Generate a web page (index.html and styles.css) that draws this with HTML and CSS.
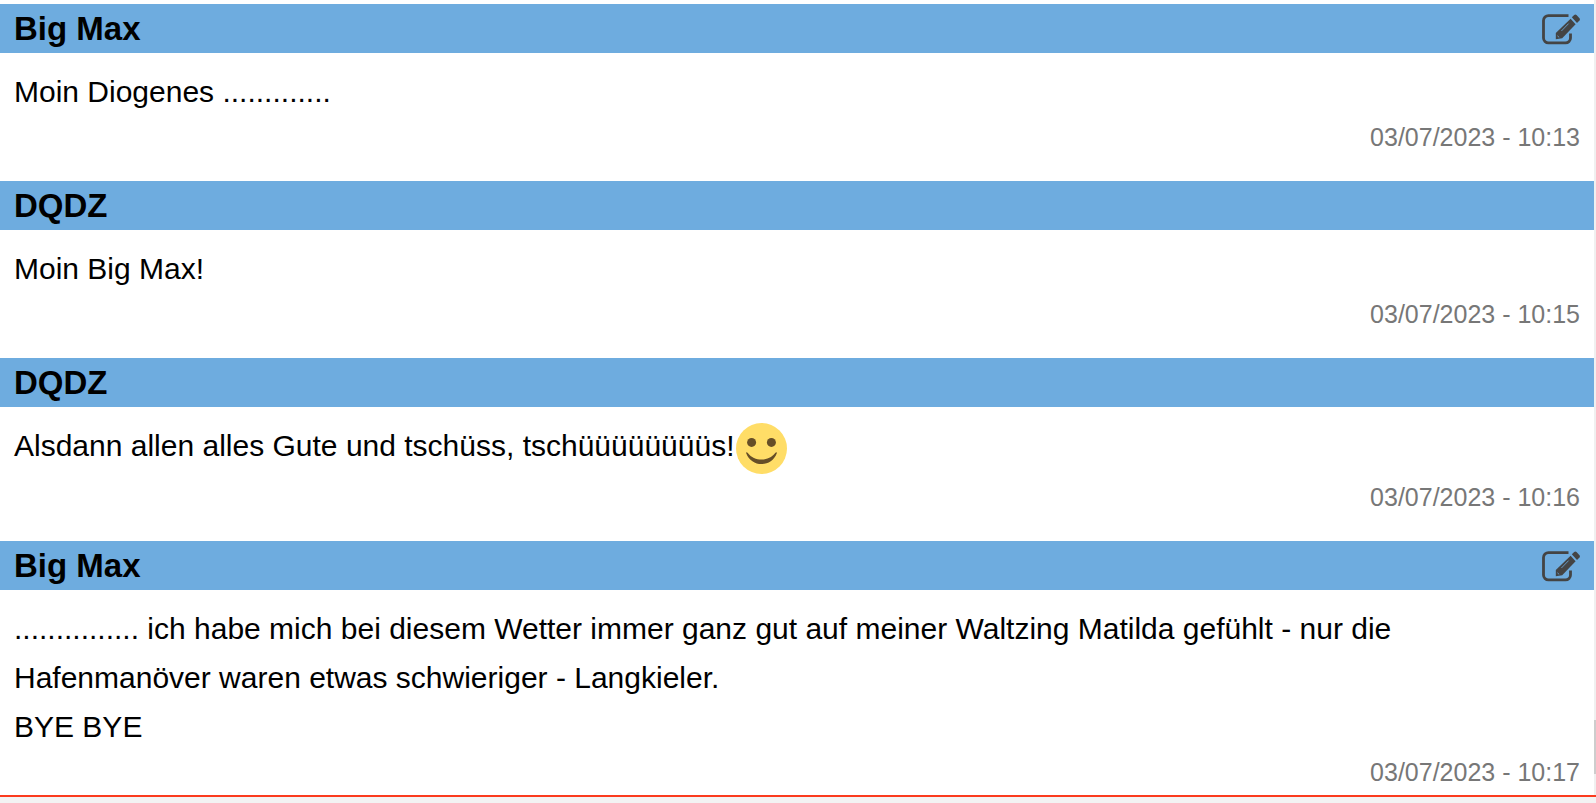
FILE: index.html
```html
<!DOCTYPE html>
<html lang="de">
<head>
    <meta charset="UTF-8">
    <meta name="viewport" content="width=device-width, initial-scale=1.0">
    <title>Chat</title>
    <link rel="stylesheet" href="styles.css">
</head>
<body>
    <svg class="sprite" aria-hidden="true">
        <symbol id="icon-edit" viewBox="0 0 38 31">
            <path d="M26.5 1.6H6.5a5 5 0 0 0-5 5V23.9a5 5 0 0 0 5 5H23.5a5 5 0 0 0 5-5V19.5" fill="none" stroke="#444" stroke-width="2.8"/>
            <path d="M28.6 4.8L33.6 10.2L20.2 24.3L13.8 25.2L13.8 18.9Z" fill="#444"/>
            <path d="M29.8 3.2L32.2 .9Q33.4 -.1 34.5 1L37.5 4.2Q38.4 5.4 37.5 6.4L35 8.9Z" fill="#444"/>
            <path d="M19.4 17L26.6 9.6M15.4 21.8L17.2 23.4" fill="none" stroke="#6eacdf" stroke-width=".8"/>
        </symbol>
    </svg>

    <div class="chat">
        <main class="messages">
            <article class="message">
                <header class="message-header">
                    <h2>Big Max</h2>
                    <button type="button" class="edit" aria-label="Bearbeiten"><svg><use href="#icon-edit"/></svg></button>
                </header>
                <p class="text">Moin Diogenes .............</p>
                <time class="date">03/07/2023 - 10:13</time>
            </article>

            <article class="message">
                <header class="message-header">
                    <h2>DQDZ</h2>
                </header>
                <p class="text">Moin Big Max!</p>
                <time class="date">03/07/2023 - 10:15</time>
            </article>

            <article class="message">
                <header class="message-header">
                    <h2>DQDZ</h2>
                </header>
                <p class="text">Alsdann allen alles Gute und tschüss, tschüüüüüüüüs!<svg class="smiley" viewBox="0 0 51 51" aria-hidden="true">
                    <circle cx="25.5" cy="25.5" r="25.5" fill="#ffdd67"/>
                    <circle cx="15.6" cy="19.4" r="4.5" fill="#664e27"/>
                    <circle cx="35.4" cy="19.4" r="4.5" fill="#664e27"/>
                    <path d="M10.2 30.2C9.8 29.2 11 29 11.8 30C18.5 38.8 32.5 38.8 39.2 30C40 29 41.2 29.2 40.8 30.2C35.6 44.6 15.4 44.6 10.2 30.2Z" fill="#664e27"/>
                </svg></p>
                <time class="date">03/07/2023 - 10:16</time>
            </article>

            <article class="message">
                <header class="message-header">
                    <h2>Big Max</h2>
                    <button type="button" class="edit" aria-label="Bearbeiten"><svg><use href="#icon-edit"/></svg></button>
                </header>
                <p class="text">............... ich habe mich bei diesem Wetter immer ganz gut auf meiner Waltzing Matilda gefühlt - nur die Hafenmanöver waren etwas schwieriger - Langkieler.<br>BYE BYE</p>
                <time class="date">03/07/2023 - 10:17</time>
            </article>
        </main>
        <div class="scrollbar"><div class="thumb"></div></div>
    </div>
</body>
</html>
```

FILE: styles.css
```css
body {
    margin: 0;
    background: #f3f3f3;
    color: #000;
    font-family: "Liberation Sans", Arial, sans-serif;
    overflow: hidden;
}

.sprite {
    display: none;
}

.chat {
    display: flex;
    background: #fff;
    border-bottom: 2px solid #fb3b1e;
}

.messages {
    flex: 1;
    display: flex;
    flex-direction: column;
    gap: 21px;
    padding-top: 4px;
}

.message {
    display: flex;
    flex-direction: column;
    padding-bottom: 2px;
}

.message-header {
    display: flex;
    justify-content: space-between;
    align-items: center;
    padding: 0 14px;
    background: #6eacdf;
}

.message-header h2 {
    margin: 0;
    font-size: 33px;
    line-height: 49px;
}

.edit {
    padding: 2px 0 0;
    border: none;
    background: none;
    cursor: pointer;
}

.edit svg {
    display: block;
    width: 38px;
    height: 31px;
}

.text {
    margin: 0;
    padding: 14px 14px 0;
    font-size: 30px;
    line-height: 49px;
}

.smiley {
    width: 51px;
    height: 51px;
    margin: 2px;
    vertical-align: middle;
}

.date {
    padding: 0 14px;
    color: #777;
    font-size: 25px;
    line-height: 42px;
    text-align: right;
}

.scrollbar {
    display: flex;
    flex-direction: column;
    justify-content: flex-end;
    width: 2px;
    padding-bottom: 21px;
    background: #f0f0f0;
}

.thumb {
    height: 54px;
    background: #cdcdcd;
}
```
